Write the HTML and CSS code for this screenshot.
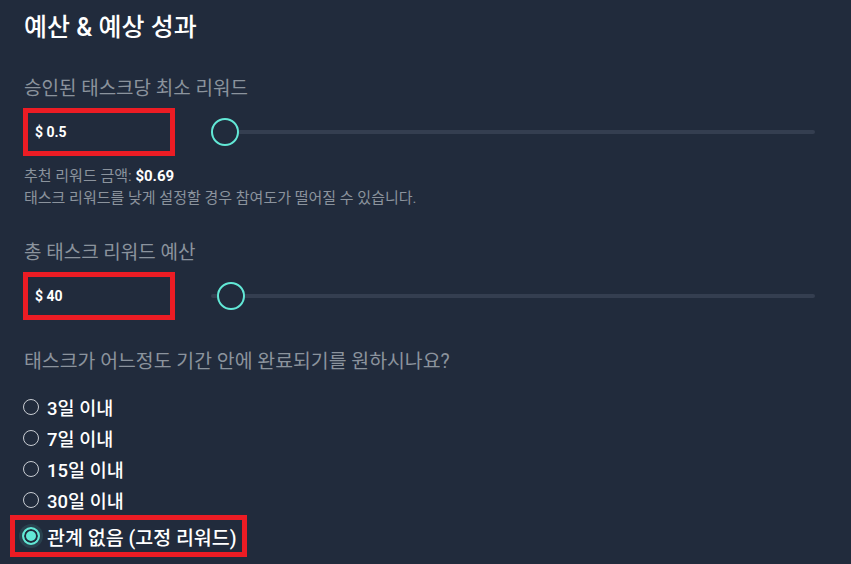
FILE: index.html
```html
<!DOCTYPE html>
<html lang="ko">
<head>
  <meta charset="UTF-8" />
  <title>예산 & 예상 성과</title>
  <link rel="stylesheet" href="styles.css">
</head>

<body>
  <h1 class="title">예산 &amp; 예상 성과</h1>

  <div class="field">
    <label class="field-label">승인된 태스크당 최소 리워드</label>
    <div class="field-row">
      <div class="amount-box">$ 0.5</div>
      <div class="slider">
        <div class="track"></div>
        <div class="thumb" style="left: 0px"></div>
      </div>
    </div>
    <p class="hint hint-first">추천 리워드 금액: <strong>$0.69</strong></p>
    <p class="hint">태스크 리워드를 낮게 설정할 경우 참여도가 떨어질 수 있습니다.</p>
  </div>

  <div class="field">
    <label class="field-label">총 태스크 리워드 예산</label>
    <div class="field-row">
      <div class="amount-box">$ 40</div>
      <div class="slider">
        <div class="track"></div>
        <div class="thumb" style="left: 6px"></div>
      </div>
    </div>
  </div>

  <div class="field">
    <label class="field-label question">태스크가 어느정도 기간 안에 완료되기를 원하시나요?</label>
    <ul class="options">
      <li class="option"><span class="radio"></span>3일 이내</li>
      <li class="option"><span class="radio"></span>7일 이내</li>
      <li class="option"><span class="radio"></span>15일 이내</li>
      <li class="option"><span class="radio"></span>30일 이내</li>
      <li class="option option-selected"><span class="radio radio-on"></span>관계 없음 (고정 리워드)</li>
    </ul>
  </div>
</body>
</html>
```

FILE: styles.css
```css
body {
  margin: 0;
  padding: 11px 36px 0 23px;
  background: #212b3c;
  color: #fff;
  font-family: Roboto, "Noto Sans CJK KR", sans-serif;
}
.title {
  margin: 0;
  font-size: 25px;
  line-height: 34px;
  font-weight: 500;
  padding-left: 1px;
}
.field-label {
  display: block;
  font-size: 19px;
  line-height: 24px;
  color: #8b939d;
  padding-left: 1px;
}
.question {
  font-size: 19.4px;
}
.field:nth-of-type(1) .field-label {
  margin-top: 32px;
}
.field:nth-of-type(2) .field-label {
  margin-top: 32px;
}
.field:nth-of-type(3) .field-label {
  margin-top: 30px;
}
.field-row {
  display: flex;
  align-items: center;
  margin-top: 7px;
}
.amount-box {
  box-sizing: border-box;
  width: 152px;
  height: 48px;
  border: 5px solid #ec1c24;
  padding-left: 7px;
  display: flex;
  align-items: center;
  font-size: 14px;
  font-weight: 700;
}
.slider {
  position: relative;
  flex: 1;
  height: 28px;
  margin-left: 36px;
}
.track {
  position: absolute;
  left: 0;
  right: 0;
  top: 12px;
  height: 4px;
  border-radius: 2px;
  background: #343e50;
}
.thumb {
  position: absolute;
  top: 0;
  box-sizing: border-box;
  width: 28px;
  height: 28px;
  border: 2.5px solid #62e8d6;
  border-radius: 50%;
  background: #212b3c;
}
.hint {
  margin: 0;
  font-size: 15px;
  line-height: 22px;
  color: #8b939d;
  padding-left: 1px;
}
.hint-first {
  margin-top: 9px;
}
.hint strong {
  color: #fff;
}
.options {
  list-style: none;
  margin: 17px 0 0;
  padding: 0;
}
.option {
  display: flex;
  align-items: center;
  height: 31px;
  font-size: 18.5px;
  font-weight: 500;
  white-space: nowrap;
}
.radio {
  flex-shrink: 0;
  box-sizing: border-box;
  width: 16px;
  height: 16px;
  border: 1.5px solid #c9cdd3;
  border-radius: 50%;
  margin-right: 8px;
}
.option-selected {
  box-sizing: border-box;
  width: 237px;
  height: 42px;
  margin-left: -13px;
  padding-left: 7px;
  border: 5px solid #ec1c24;
  font-size: 19.5px;
}
.radio-on {
  width: 18px;
  height: 18px;
  border: 2px solid #62e8d6;
  background: #62e8d6;
  box-shadow: inset 0 0 0 2px #212b3c, 0 0 0 3px rgba(98, 232, 214, 0.12);
  margin-right: 7px;
}
```
